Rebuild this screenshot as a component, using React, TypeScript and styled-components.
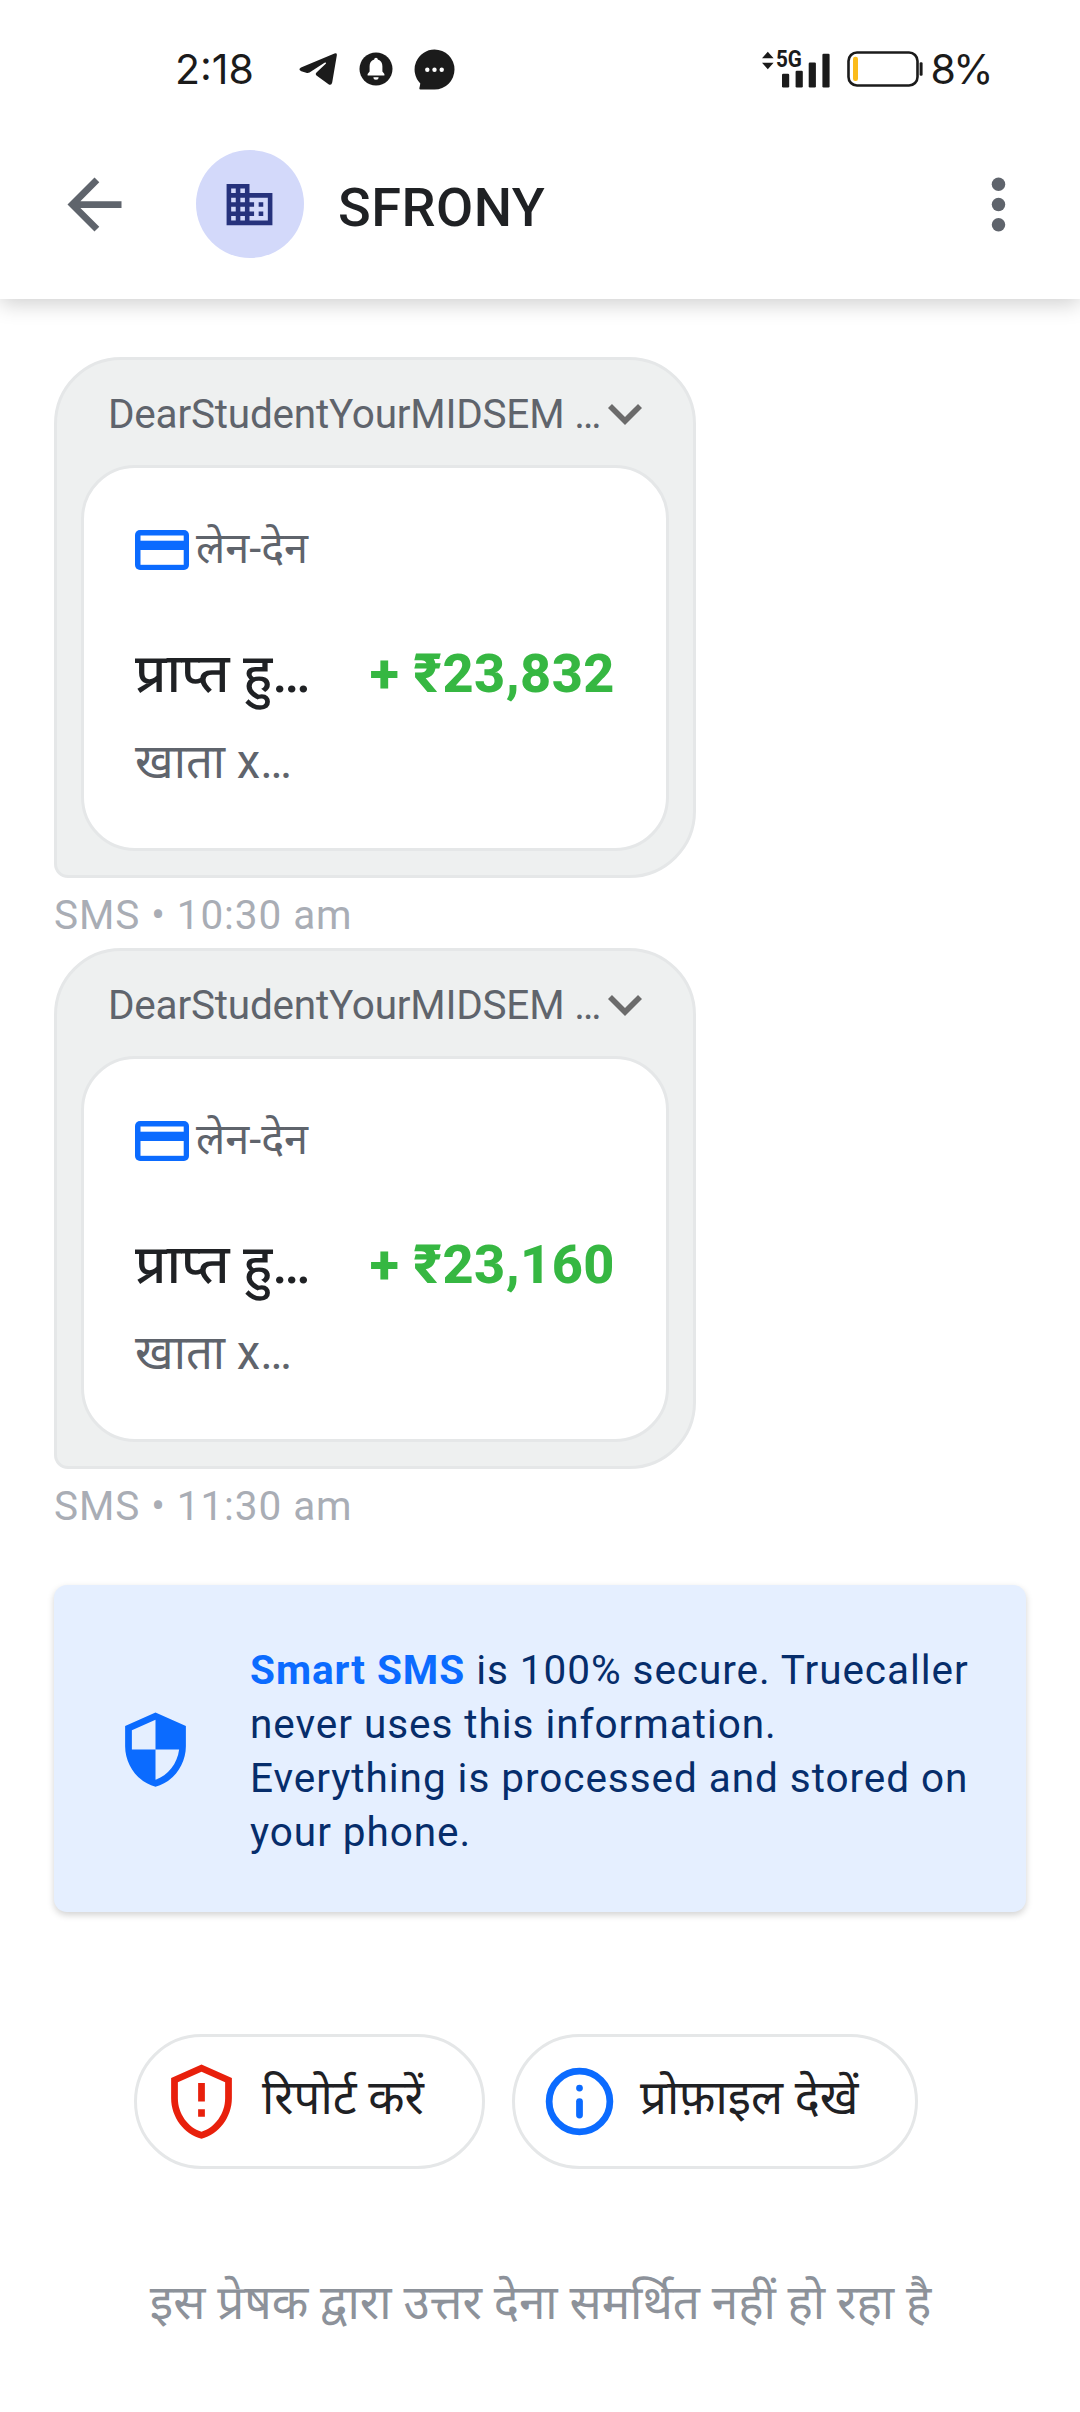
import React from "react";
import styled, { createGlobalStyle } from "styled-components";

const GlobalStyle = createGlobalStyle`
  *, *::before, *::after { box-sizing: border-box; }
  body {
    margin: 0;
    background: #ffffff;
    font-family: Roboto, "Noto Sans Devanagari", "Noto Sans", sans-serif;
    color: #1f2124;
  }
`;

const Screen = styled.div`
  width: 1080px;
  height: 2412px;
  overflow: hidden;
  display: flex;
  flex-direction: column;
  background: #ffffff;
`;

const TopArea = styled.header`
  height: 299px;
  flex: none;
  background: #ffffff;
  box-shadow: 0 5px 20px rgba(0, 0, 0, 0.19);
`;

const StatusBar = styled.div`
  height: 138px;
  padding: 0 89px 0 175px;
  display: flex;
  align-items: center;
`;

const StatusText = styled.span<{ $spacing: number }>`
  font-family: Inter, sans-serif;
  font-size: 41px;
  line-height: 50px;
  letter-spacing: ${(p) => p.$spacing}px;
  color: #1b1b1b;
  white-space: nowrap;
`;

const NoticeIcons = styled.div`
  display: flex;
  align-items: center;
  gap: 21px;
  margin-left: 45px;
  height: 40px;
`;

const StatusRight = styled.div`
  display: flex;
  align-items: center;
  width: 229px;
  margin-left: auto;

  ${StatusText} {
    margin-left: auto;
  }
`;

const SignalBox = styled.div`
  position: relative;
  display: flex;
  width: 68px;
  height: 38px;
  margin-right: 17px;
`;

const NetworkTag = styled.span`
  position: absolute;
  left: 14px;
  top: -3px;
  font-size: 24px;
  line-height: 24px;
  font-weight: 700;
  color: #1b1b1b;
  transform: scaleX(0.86);
  transform-origin: 0 0;
`;

const Toolbar = styled.div`
  height: 132px;
  padding: 0 41px 0 54px;
  display: flex;
  align-items: center;
`;

const Avatar = styled.div`
  width: 108px;
  height: 108px;
  margin-left: 61px;
  padding-right: 1px;
  border-radius: 50%;
  background: #d3d9fa;
  display: flex;
  align-items: center;
  justify-content: center;
`;

const Title = styled.h1`
  margin: 7px 0 0 34px;
  flex: 1;
  font-size: 54px;
  line-height: 64px;
  font-weight: 500;
  letter-spacing: 0.5px;
`;

const Thread = styled.main`
  flex: 1;
  display: flex;
  flex-direction: column;
  padding: 58px 54px 0;
`;

const Bubble = styled.article`
  width: 642px;
  height: 521px;
  padding: 0 24px;
  border: 3px solid #e5e7e8;
  border-radius: 67px 67px 67px 14px;
  background: #eef0f0;
`;

const BubbleHeader = styled.div`
  height: 105px;
  display: flex;
  align-items: center;
  justify-content: space-between;
  padding: 3px 27px 0 27px;
`;

const Preview = styled.span`
  font-size: 40.5px;
  line-height: 48px;
  letter-spacing: -0.22px;
  color: #5f646c;
  white-space: nowrap;
`;

const TransactionCard = styled.div`
  height: 386px;
  padding: 53px 51px 0;
  border: 3px solid #e5e7e8;
  border-radius: 54px;
  background: #ffffff;
`;

const Category = styled.div`
  display: flex;
  align-items: center;
  gap: 7px;
  height: 58px;
  font-size: 43.2px;
  line-height: 58px;
  color: #5f646c;
`;

const CategoryName = styled.span`
  margin-top: -3px;
`;

const AmountRow = styled.div`
  display: flex;
  align-items: center;
  justify-content: space-between;
  height: 64px;
  margin-top: 63px;
  font-size: 54px;
  line-height: 64px;
  white-space: nowrap;
`;

const Status = styled.span`
  font-weight: 500;
`;

const Amount = styled.span`
  font-weight: 850;
  letter-spacing: 0.5px;
  color: #36b742;
`;

const Account = styled.div`
  margin-top: 27px;
  font-size: 47.25px;
  line-height: 58px;
  color: #5f646c;
`;

const Meta = styled.div`
  height: 70px;
  padding-top: 13px;
  font-size: 40.5px;
  line-height: 48px;
  letter-spacing: 0.92px;
  color: #a9adb5;
`;

const SecureCard = styled.section`
  height: 327px;
  margin-top: 46px;
  flex: none;
  padding: 1px 0 0 61px;
  display: flex;
  align-items: center;
  border-radius: 13px;
  background: #e5efff;
  box-shadow: 0 3px 7px rgba(0, 0, 0, 0.18);
`;

const SecureText = styled.p`
  width: 740px;
  margin: 4px 0 0 54px;
  font-size: 40.5px;
  line-height: 54px;
  letter-spacing: 0.95px;
  color: #062d6b;

  strong {
    color: #0b6bff;
    font-weight: 700;
  }
`;

const Actions = styled.div`
  display: flex;
  gap: 27px;
  margin: 122px 0 0 80px;
`;

const ActionButton = styled.button<{ $width: number }>`
  width: ${(p) => p.$width}px;
  height: 135px;
  padding: 0 0 0 24px;
  display: flex;
  align-items: center;
  gap: 20px;
  border: 3px solid #e5e7e8;
  border-radius: 68px;
  background: #ffffff;
  color: #1f2124;
  font-family: inherit;
  font-size: 47.25px;
  line-height: 60px;
  white-space: nowrap;
`;

const ActionLabel = styled.span`
  margin-top: -7px;
`;

const Footnote = styled.footer`
  margin-top: 104px;
  padding-left: 1px;
  text-align: center;
  font-size: 47.6px;
  line-height: 60px;
  color: #8d929a;
  white-space: nowrap;
`;

const TelegramIcon = () => (
  <svg width="39" height="34" viewBox="0 0 39 34">
    <path
      fill="#1b1b1b"
      d="M2 15.500L35.500 1.500Q38.300.7 37.800 3.500L33.200 30.500Q32.400 34 29.500 32.300L17.500 23.500Q16 22 17.500 20.500L27 11.500Q27.600 10 25.500 10.800L10.500 20.500Q9 21.300 7.200 20.800L2.300 19.200Q-1.300 17.500 2 15.500Z"
    />
  </svg>
);

const BellIcon = () => (
  <svg width="34" height="34" viewBox="0 0 34 34">
    <circle cx="17" cy="17" r="16.500" fill="#1b1b1b" />
    <path
      fill="#fff"
      d="M17 5.800c1.100 0 1.700.7 1.800 1.700 3.200 1 4.600 3.500 4.600 6.800v5.200l2 2.600v1.400H8.600v-1.400l2-2.600v-5.200c0-3.300 1.400-5.800 4.600-6.800.1-1 .7-1.700 1.800-1.700zM14.400 25.200h5.200a2.600 2.500 0 0 1-5.200 0z"
    />
  </svg>
);

const ChatIcon = () => (
  <svg width="41" height="41" viewBox="0 0 41 41">
    <path fill="#1b1b1b" d="M20.500.5a20 20 0 1 1 0 40H6.500Q4.800 40.300 5.600 38.300L6.300 34.500A20 20 0 0 1 20.500.5z" />
    <circle cx="13.300" cy="20.800" r="2.200" fill="#fff" />
    <circle cx="20.500" cy="20.800" r="2.200" fill="#fff" />
    <circle cx="27.700" cy="20.800" r="2.200" fill="#fff" />
  </svg>
);

const SignalIcon = () => (
  <svg width="68" height="38" viewBox="0 0 68 38" fill="#1b1b1b">
    <path d="M0 8.300L5.800 1.800l5.800 6.500zM0 12.700h11.600l-5.800 6.500z" />
    <rect x="20" y="23.700" width="7.200" height="13.800" rx="1.200" />
    <rect x="33.600" y="20.700" width="7.200" height="16.800" rx="1.200" />
    <rect x="46.700" y="12.500" width="7.200" height="25" rx="1.200" />
    <rect x="60.400" y="3.700" width="7.200" height="33.800" rx="1.200" />
  </svg>
);

const BatteryIcon = () => (
  <svg width="76" height="36" viewBox="0 0 76 36">
    <rect x="1.500" y="1.500" width="69" height="33" rx="8.500" fill="none" stroke="#1b1b1b" strokeWidth="2.600" />
    <rect x="6" y="5.700" width="5" height="24.300" rx="2.200" fill="#fbbc1b" />
    <rect x="72.600" y="11.300" width="3" height="13.400" rx="1.200" fill="#1b1b1b" />
  </svg>
);

const BackIcon = () => (
  <svg width="81" height="81" viewBox="0 0 24 24" fill="#5f646c">
    <path d="M20 11H7.830l5.590-5.590L12 4l-8 8 8 8 1.410-1.410L7.830 13H20v-2z" />
  </svg>
);

const BuildingIcon = () => (
  <svg width="55" height="55" viewBox="0 0 24 24" fill="#26327c">
    <path d="M12 7V3H2v18h20V7H12zM6 19H4v-2h2v2zm0-4H4v-2h2v2zm0-4H4V9h2v2zm0-4H4V5h2v2zm4 12H8v-2h2v2zm0-4H8v-2h2v2zm0-4H8V9h2v2zm0-4H8V5h2v2zm10 12h-8v-2h2v-2h-2v-2h2v-2h-2V9h8v10zm-2-8h-2v2h2v-2zm0 4h-2v2h2v-2z" />
  </svg>
);

const MoreIcon = () => (
  <svg width="81" height="81" viewBox="0 0 24 24" fill="#5f646c">
    <circle cx="12" cy="6" r="2" />
    <circle cx="12" cy="12" r="2" />
    <circle cx="12" cy="18" r="2" />
  </svg>
);

const ChevronIcon = () => (
  <svg width="34" height="21" viewBox="6 8.590 12 7.410" fill="#6b6b6b">
    <path d="M16.590 8.590L12 13.170 7.410 8.590 6 10l6 6 6-6z" />
  </svg>
);

const CardIcon = () => (
  <svg width="54" height="40" viewBox="0 0 54 40">
    <rect width="54" height="40" rx="5" fill="#0b6bff" />
    <rect x="5.500" y="5.500" width="43.200" height="5.200" fill="#fff" />
    <rect x="5.500" y="20" width="43.200" height="14.800" fill="#fff" />
  </svg>
);

const ShieldIcon = () => (
  <svg width="81" height="81" viewBox="0 0 24 24" fill="#0b6bff">
    <path d="M12 1L3 5v6c0 5.550 3.840 10.740 9 12 5.160-1.260 9-6.450 9-12V5l-9-4zm0 10.990h7c-.53 4.120-3.280 7.790-7 8.940V12H5V6.300l7-3.110v8.800z" />
  </svg>
);

const ReportIcon = () => (
  <svg width="81" height="81" viewBox="0 0 24 24" fill="#e8200c">
    <path d="M12 1L3 5v6c0 5.550 3.840 10.740 9 12 5.160-1.260 9-6.450 9-12V5l-9-4zm7 10c0 4.520-2.980 8.690-7 9.930-4.020-1.240-7-5.410-7-9.930V6.300l7-3.110 7 3.110V11zM11 6.500h2V12h-2zm0 7.800h2v2.200h-2z" />
  </svg>
);

const InfoIcon = () => (
  <svg width="81" height="81" viewBox="0 0 24 24">
    <circle cx="12" cy="12" r="9" fill="none" stroke="#0b6bff" strokeWidth="2" />
    <circle cx="12" cy="8" r="1" fill="#0b6bff" />
    <path d="M12 12v4" stroke="#0b6bff" strokeWidth="2" strokeLinecap="round" />
  </svg>
);

const messages = [
  { amount: "+ ₹23,832", time: "10:30 am" },
  { amount: "+ ₹23,160", time: "11:30 am" },
];

export default function App() {
  return (
    <>
      <GlobalStyle />
      <Screen>
        <TopArea>
          <StatusBar>
            <StatusText $spacing={0}>2:18</StatusText>
            <NoticeIcons>
              <TelegramIcon />
              <BellIcon />
              <ChatIcon />
            </NoticeIcons>
            <StatusRight>
              <SignalBox>
                <SignalIcon />
                <NetworkTag>5G</NetworkTag>
              </SignalBox>
              <BatteryIcon />
              <StatusText $spacing={-2.5}>8%</StatusText>
            </StatusRight>
          </StatusBar>
          <Toolbar>
            <BackIcon />
            <Avatar>
              <BuildingIcon />
            </Avatar>
            <Title>SFRONY</Title>
            <MoreIcon />
          </Toolbar>
        </TopArea>
        <Thread>
          {messages.map((m) => (
            <React.Fragment key={m.time}>
              <Bubble>
                <BubbleHeader>
                  <Preview>DearStudentYourMIDSEM …</Preview>
                  <ChevronIcon />
                </BubbleHeader>
                <TransactionCard>
                  <Category>
                    <CardIcon />
                    <CategoryName>लेन-देन</CategoryName>
                  </Category>
                  <AmountRow>
                    <Status>प्राप्त हु…</Status>
                    <Amount>{m.amount}</Amount>
                  </AmountRow>
                  <Account>खाता x…</Account>
                </TransactionCard>
              </Bubble>
              <Meta>SMS • {m.time}</Meta>
            </React.Fragment>
          ))}
          <SecureCard>
            <ShieldIcon />
            <SecureText>
              <strong>Smart SMS</strong> is 100% secure. Truecaller never uses this information.
              <br />
              Everything is processed and stored on your phone.
            </SecureText>
          </SecureCard>
          <Actions>
            <ActionButton $width={351}>
              <ReportIcon />
              <ActionLabel>रिपोर्ट करें</ActionLabel>
            </ActionButton>
            <ActionButton $width={406}>
              <InfoIcon />
              <ActionLabel>प्रोफ़ाइल देखें</ActionLabel>
            </ActionButton>
          </Actions>
          <Footnote>इस प्रेषक द्वारा उत्तर देना समर्थित नहीं हो रहा है</Footnote>
        </Thread>
      </Screen>
    </>
  );
}
